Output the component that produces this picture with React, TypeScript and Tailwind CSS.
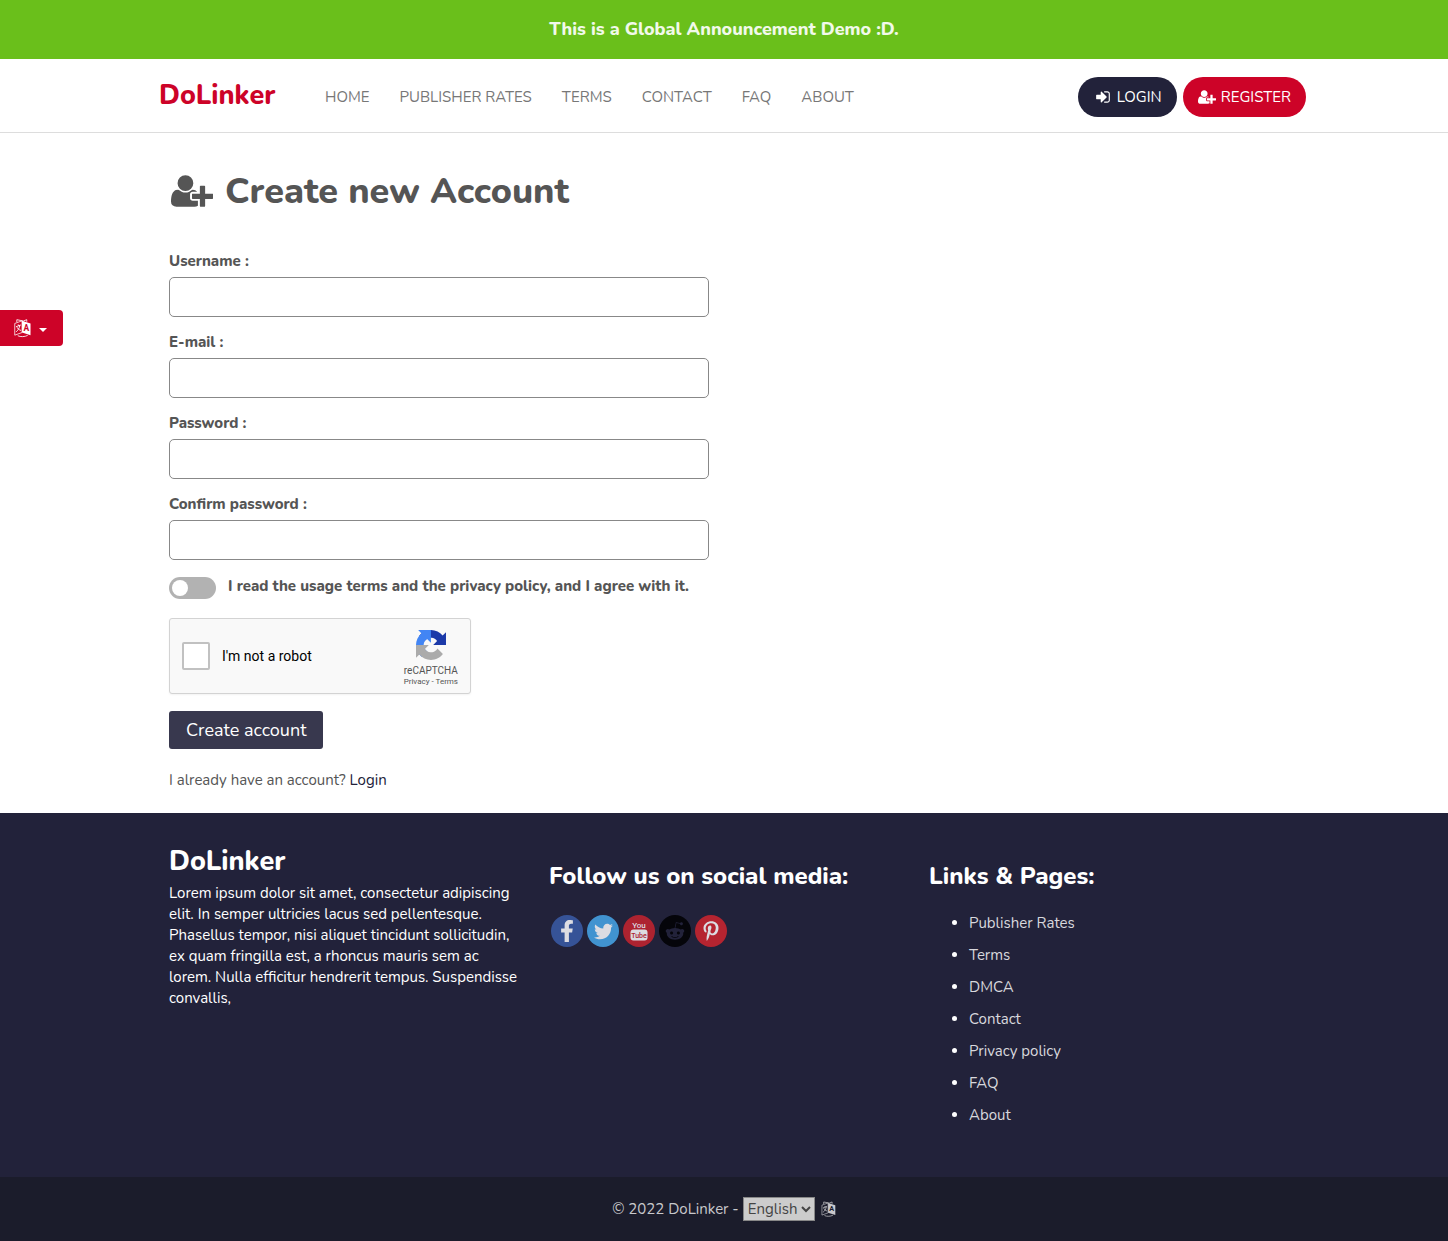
import { useState } from "react";
import type { ReactNode } from "react";
import { FaFacebookF, FaTwitter, FaRedditAlien, FaPinterestP } from "react-icons/fa";

const navLinks = ["HOME", "PUBLISHER RATES", "TERMS", "CONTACT", "FAQ", "ABOUT"];

const fields = [
  { id: "username", label: "Username :", type: "text" },
  { id: "email", label: "E-mail :", type: "email" },
  { id: "password", label: "Password :", type: "password" },
  { id: "confirm", label: "Confirm password :", type: "password" },
];

const pages = ["Publisher Rates", "Terms", "DMCA", "Contact", "Privacy policy", "FAQ", "About"];

function UserPlusIcon({ className }: { className: string }) {
  return (
    <svg viewBox="0 0 2048 1792" fill="currentColor" aria-hidden="true" className={className}>
      <path d="M704 896q-159 0-271.5-112.5t-112.5-271.5 112.5-271.5 271.5-112.5 271.5 112.5 112.5 271.5-112.5 271.5-271.5 112.5zm960 128h352q13 0 22.5 9.5t9.5 22.5v192q0 13-9.5 22.5t-22.5 9.5h-352v352q0 13-9.5 22.5t-22.5 9.5h-192q-13 0-22.5-9.5t-9.5-22.5v-352h-352q-13 0-22.5-9.5t-9.5-22.5v-192q0-13 9.5-22.5t22.5-9.5h352v-352q0-13 9.5-22.5t22.5-9.5h192q13 0 22.5 9.5t9.5 22.5v352zm-736 224q0 52 38 90t90 38h256v238q-68 50-171 50h-874q-121 0-194-69t-73-190q0-53 3.5-103.5t14-109 26.5-108.5 43-97.5 62-81 85.5-53.5 111.5-20q19 0 39 17 79 61 154.5 91.5t164.5 30.5 164.5-30.5 154.5-91.5q20-17 39-17 132 0 217 96h-223q-52 0-90 38t-38 90v192z" />
    </svg>
  );
}

function SignInIcon({ className }: { className: string }) {
  return (
    <svg viewBox="0 0 1792 1792" fill="currentColor" aria-hidden="true" className={className}>
      <path d="M1312 896q0 26-19 45l-544 544q-19 19-45 19t-45-19-19-45v-288h-448q-26 0-45-19t-19-45v-384q0-26 19-45t45-19h448v-288q0-26 19-45t45-19 45 19l544 544q19 19 19 45zm352-352v704q0 119-84.5 203.5t-203.5 84.5h-320q-13 0-22.5-9.5t-9.5-22.5q0-4-1-20t-.5-26.5 3-23.5 10-19.5 20.5-6.5h320q66 0 113-47t47-113v-704q0-66-47-113t-113-47h-312l-11.5-1-11.5-3-8-5.5-7-9-2-13.5q0-4-1-20t-.5-26.5 3-23.5 10-19.5 20.5-6.5h320q119 0 203.5 84.5t84.5 203.5z" />
    </svg>
  );
}

// open booklet: outlined page on the left, solid page on the right
function LanguageIcon({ className, letter }: { className: string; letter: string }) {
  return (
    <svg viewBox="0 0 18 20" fill="none" stroke="currentColor" aria-hidden="true" className={className}>
      <path d="M.8 5.2 8.500 2.400v12.400L.8 17.600z" strokeWidth=".8" />
      <path d="M2.200 8.600l5-1.800M4.400 6.200l.6 1.400M6.200 7.400C5.600 10.400 4.200 12.600 2.300 14M3.200 9.200c.9 1.800 2.200 2.900 4.200 3.300" strokeWidth="1" />
      <path d="M8.500 2.400l9 2.800v12.400L8.500 14.800z" fill="currentColor" stroke="none" />
      <path d="M3 3.800V1.200l7 1.400 3.500-1.400v2.200M4 18.200c3 1.400 7.500 1.200 10.500-.4" strokeWidth=".9" />
      <text x="13" y="13" textAnchor="middle" stroke="none" className={`font-[Roboto] text-[9px] font-bold ${letter}`}>
        A
      </text>
    </svg>
  );
}

function RecaptchaLogo() {
  return (
    <svg viewBox="0 0 64 64" aria-hidden="true" className="size-[30px]">
      <path fill="#1c3aa9" d="M64 31.955l-.033-1.37V4.687l-7.16 7.16C50.948 4.674 42.033.093 32.05.093c-10.4 0-19.622 4.96-25.458 12.64l11.736 11.86a15.55 15.55 0 0 1 4.754-5.334c2.05-1.6 4.952-2.906 8.968-2.906.485 0 .86.057 1.135.163 4.976.393 9.288 3.14 11.828 7.124l-8.307 8.307L64 31.953" />
      <path fill="#4285f4" d="M31.862.094l-1.37.033H4.594l7.16 7.16C4.58 13.147 0 22.06 0 32.046c0 10.4 4.96 19.622 12.64 25.458L24.5 45.768a15.55 15.55 0 0 1-5.334-4.754c-1.6-2.05-2.906-4.952-2.906-8.968 0-.485.057-.86.163-1.135.393-4.976 3.14-9.288 7.124-11.828l8.307 8.307L31.86.095" />
      <path fill="#ababab" d="M.001 32.045l.033 1.37v25.898l7.16-7.16c5.86 7.173 14.774 11.754 24.76 11.754 10.4 0 19.622-4.96 25.458-12.64l-11.736-11.86a15.55 15.55 0 0 1-4.754 5.334c-2.05 1.6-4.952 2.906-8.968 2.906-.485 0-.86-.057-1.135-.163-4.976-.393-9.288-3.14-11.828-7.124l8.307-8.307c-10.522.04-22.4.066-27.295-.005" />
    </svg>
  );
}

function YouTubeIcon() {
  return (
    <svg viewBox="0 0 32 32" fill="currentColor" aria-hidden="true" className="size-8">
      <text x="16" y="13" textAnchor="middle" className="font-[Roboto] text-[8px] font-medium">
        You
      </text>
      <rect x="7.500" y="14.500" width="17" height="11" rx="3" />
      <text x="16" y="22.500" textAnchor="middle" fill="#ad2330" className="font-[Roboto] text-[7px] font-medium">
        Tube
      </text>
    </svg>
  );
}

function SocialLink({ name, color, children }: { name: string; color: string; children: ReactNode }) {
  return (
    <a href="#" aria-label={name} className={`flex size-8 items-center justify-center rounded-full ${color}`}>
      {children}
    </a>
  );
}

export default function App() {
  const [agree, setAgree] = useState(false);

  return (
    <div className="relative bg-white font-[Nunito,Lato,sans-serif] text-[15px] text-[#555]">
      <div className="flex h-[59px] items-center justify-center bg-[#6abf1b] pb-0.5 text-lg font-extrabold text-[#f1f9ea]">
        This is a Global Announcement Demo :D.
      </div>

      <header className="border-b border-[#ddd]">
        <div className="mx-auto flex h-[73px] max-w-[1140px] items-center pt-0.5 pl-[5px]">
          <a href="#" className="w-[151px] shrink-0 pb-0.5 text-[27px] leading-8 font-extrabold text-[#cd0328]">
            DoLinker
          </a>
          <nav className="flex grow pt-px text-[#777]">
            {navLinks.map((item) => (
              <a key={item} href="#" className="px-[15px]">
                {item}
              </a>
            ))}
          </nav>
          <div className="-mr-3 flex shrink-0 gap-1.5 leading-6 text-white">
            <a href="#" className="flex h-10 items-center gap-[5px] rounded-full bg-[#22223a] pr-[15px] pl-4">
              <SignInIcon className="h-4 w-[18px]" />
              LOGIN
            </a>
            <a href="#" className="flex h-10 items-center gap-[5px] rounded-full bg-[#cd0328] px-[15px]">
              <UserPlusIcon className="h-4 w-[18px]" />
              REGISTER
            </a>
          </div>
        </div>
      </header>

      <button
        type="button"
        aria-label="Change language"
        className="absolute top-[310px] left-0 flex h-9 w-[63px] items-center gap-2 rounded-r bg-[#cd0328] pl-3.5 text-white"
      >
        <LanguageIcon className="h-5 w-[17px]" letter="fill-[#cd0328]" />
        <span className="mt-1 border-x-4 border-t-4 border-x-transparent border-t-white" />
      </button>

      <main className="mx-auto max-w-[1140px] px-[15px] pt-9 pb-[21px]">
        <h1 className="flex h-[45px] items-center gap-3 text-4xl font-extrabold">
          <UserPlusIcon className="mb-0.5 ml-0.5 h-[38px] w-[42px]" />
          Create new Account
        </h1>

        <form className="max-w-[540px] pt-[35px]" onSubmit={(e) => e.preventDefault()}>
          {fields.map((field) => (
            <div key={field.id} className="mb-[13px]">
              <label htmlFor={field.id} className="mb-1 block leading-6 font-extrabold">
                {field.label}
              </label>
              <input
                id={field.id}
                type={field.type}
                className="block h-10 w-full rounded-[5px] border border-[#888] bg-white px-3 outline-none"
              />
            </div>
          ))}

          <label className="flex items-start gap-3 pt-1 font-extrabold">
            <input
              type="checkbox"
              checked={agree}
              onChange={(e) => setAgree(e.target.checked)}
              className="peer sr-only"
            />
            <span className="flex h-[22px] w-[47px] shrink-0 items-center rounded-full bg-[#b2b2b2] px-[3px] peer-checked:justify-end peer-checked:bg-[#22223a]">
              <span className="size-4 rounded-full bg-white" />
            </span>
            <span className="leading-[18px]">I read the usage terms and the privacy policy, and I agree with it.</span>
          </label>

          <div className="mt-[19px] flex h-[76px] w-[302px] items-center justify-between rounded-[3px] border border-[#d3d3d3] bg-[#f9f9f9] pr-3 pl-3 font-[Roboto,sans-serif] shadow-xs">
            <label className="flex items-center gap-3 text-sm text-black">
              <input type="checkbox" className="size-7 appearance-none rounded-xs border-2 border-[#c1c1c1] bg-white" />
              I'm not a robot
            </label>
            <div className="flex flex-col items-center pt-[5px] text-[#555]">
              <RecaptchaLogo />
              <span className="mt-1 text-[10px] leading-[13px]">reCAPTCHA</span>
              <span className="text-[8px] leading-[10px]">
                <a href="#">Privacy</a> - <a href="#">Terms</a>
              </span>
            </div>
          </div>

          <button type="submit" className="mt-[17px] h-[38px] rounded-[3px] bg-[#38384e] px-[17px] text-lg text-white">
            Create account
          </button>
        </form>

        <p className="mt-[19px] leading-6">
          I already have an account?{" "}
          <a href="#" className="text-[#22223a]">
            Login
          </a>
        </p>
      </main>

      <footer className="bg-[#22223a] text-white">
        <div className="mx-auto grid min-h-[364px] max-w-[1140px] grid-cols-3">
          <section className="px-[15px] pt-[33px]">
            <h2 className="text-[27px] leading-8 font-extrabold">DoLinker</h2>
            <p className="mt-[5px] leading-[21px]">
              Lorem ipsum dolor sit amet, consectetur adipiscing elit. In semper ultricies lacus sed pellentesque.
              Phasellus tempor, nisi aliquet tincidunt sollicitudin, ex quam fringilla est, a rhoncus mauris sem ac
              lorem. Nulla efficitur hendrerit tempus. Suspendisse convallis,
            </p>
          </section>

          <section className="px-[15px] pt-[47px]">
            <h3 className="text-2xl leading-8 font-extrabold">Follow us on social media:</h3>
            <div className="mt-[23px] flex gap-1 pl-0.5 text-[#dcdce2]">
              <SocialLink name="Facebook" color="bg-[#365397]">
                <FaFacebookF className="size-[22px]" />
              </SocialLink>
              <SocialLink name="Twitter" color="bg-[#4193d0]">
                <FaTwitter className="size-[19px]" />
              </SocialLink>
              <SocialLink name="YouTube" color="bg-[#ad2330]">
                <YouTubeIcon />
              </SocialLink>
              <SocialLink name="Reddit" color="bg-[#05050a]">
                <FaRedditAlien className="size-5 text-[#22223a]" />
              </SocialLink>
              <SocialLink name="Pinterest" color="bg-[#b52430]">
                <FaPinterestP className="size-5" />
              </SocialLink>
            </div>
          </section>

          <section className="px-[15px] pt-[47px]">
            <h3 className="text-2xl leading-8 font-extrabold">Links &amp; Pages:</h3>
            <ul className="mt-[15px] list-disc pl-10 leading-8">
              {pages.map((page) => (
                <li key={page}>
                  <a href="#" className="text-[#d8d8dd]">
                    {page}
                  </a>
                </li>
              ))}
            </ul>
          </section>
        </div>

        <div className="flex h-16 items-center justify-center gap-1 bg-[#1b1c2b] text-[#c8c8cc]">
          <label htmlFor="language">© 2022 DoLinker -</label>
          <select id="language" className="h-6 w-[72px] border border-[#888] bg-[#ccc] text-[#444]">
            <option>English</option>
          </select>
          <LanguageIcon className="ml-0.5 h-4 w-[15px]" letter="fill-[#1b1c2b]" />
        </div>
      </footer>
    </div>
  );
}
